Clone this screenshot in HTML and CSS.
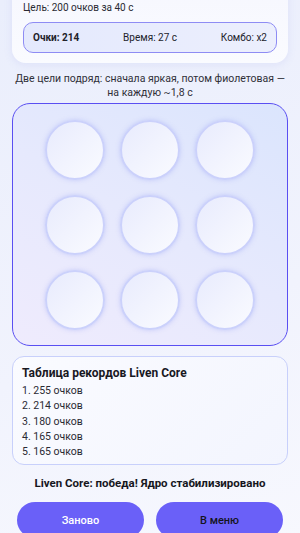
FILE: index.html
```html
<!DOCTYPE html>
<html lang="ru">
<head>
    <meta charset="UTF-8">
    <meta name="viewport" content="width=device-width, initial-scale=1.0">
    <title>Liven Core</title>
    <link rel="stylesheet" href="styles.css">
</head>
<body>
    <div class="app">
        <!-- Goal and stats -->
        <section class="status-card">
            <p class="goal">Цель: 200 очков за 40 с</p>
            <div class="stats">
                <span class="stat stat-score">Очки: 214</span>
                <span class="stat">Время: 27 с</span>
                <span class="stat">Комбо: x2</span>
            </div>
        </section>

        <p class="hint">Две цели подряд: сначала яркая, потом фиолетовая — на каждую ~1,8 с</p>

        <!-- Game board -->
        <section class="board">
            <div class="cell"></div>
            <div class="cell"></div>
            <div class="cell"></div>
            <div class="cell"></div>
            <div class="cell"></div>
            <div class="cell"></div>
            <div class="cell"></div>
            <div class="cell"></div>
            <div class="cell"></div>
        </section>

        <!-- Records -->
        <section class="records">
            <h2 class="records-title">Таблица рекордов Liven Core</h2>
            <ol class="records-list">
                <li>1. 255 очков</li>
                <li>2. 214 очков</li>
                <li>3. 180 очков</li>
                <li>4. 165 очков</li>
                <li>5. 165 очков</li>
            </ol>
        </section>

        <p class="result">Liven Core: победа! Ядро стабилизировано</p>

        <div class="actions">
            <button class="btn btn-restart">Заново</button>
            <button class="btn btn-menu">В меню</button>
        </div>
    </div>
</body>
</html>
```

FILE: styles.css
```css
/* Reset and base styles */
* {
    margin: 0;
    padding: 0;
    box-sizing: border-box;
    font-family: Roboto, 'Noto Sans', sans-serif;
}

body {
    background: linear-gradient(160deg, #eaeefc 0%, #f1f3fd 60%, #f7f8fe 100%);
    min-height: 100vh;
    overflow: hidden;
    color: #1b1b24;
}

.app {
    padding: 0 12px;
}

/* Status card */
.status-card {
    margin-top: -20px;
    padding: 20px 11px 10px;
    background: linear-gradient(180deg, #f6f7fe 0%, #fafbff 100%);
    border-radius: 0 0 14px 14px;
    box-shadow: 0 2px 8px rgba(120, 130, 220, 0.12);
}

.goal {
    font-size: 10px;
    line-height: 16px;
    color: #2a2a33;
    margin-bottom: 6px;
}

.stats {
    display: flex;
    justify-content: space-between;
    align-items: center;
    height: 31px;
    padding: 0 9px;
    border: 1px solid #8e8cf4;
    border-radius: 10px;
    background: linear-gradient(90deg, #e4e9fd 0%, #eceffd 100%);
}

.stat {
    font-size: 10px;
    color: #22222b;
}

.stat-score {
    font-weight: 700;
}

.hint {
    margin: 9px 0 3px;
    text-align: center;
    font-size: 10.5px;
    line-height: 14px;
    color: #2f2f38;
}

/* Game board */
.board {
    display: grid;
    grid-template-columns: repeat(3, 60px);
    gap: 15px;
    justify-content: center;
    padding: 16px 0 15px;
    border: 1.5px solid #5a4ff2;
    border-radius: 18px;
    background: linear-gradient(30deg, #efebfd 0%, #e6e9fd 50%, #dbe5fd 100%);
}

.cell {
    width: 60px;
    height: 60px;
    border-radius: 50%;
    border: 2px solid #cbd1fb;
    background: linear-gradient(135deg, #e8ebfd 0%, #fafbff 100%);
    box-shadow: 0 0 4px rgba(160, 170, 245, 0.5);
}

/* Records */
.records {
    margin-top: 10px;
    padding: 9px 9px 5px;
    border: 1px solid #c8d0fb;
    border-radius: 12px;
    background: linear-gradient(135deg, #fafbff 0%, #f3f5fe 100%);
}

.records-title {
    font-size: 12px;
    font-weight: 700;
    line-height: 14px;
    color: #18181f;
    margin-bottom: 3px;
}

.records-list {
    list-style: none;
}

.records-list li {
    font-size: 10.5px;
    line-height: 15.25px;
    color: #2a2a33;
}

.result {
    margin-top: 11px;
    text-align: center;
    font-size: 11.5px;
    line-height: 14px;
    font-weight: 700;
    color: #16161d;
}

/* Buttons */
.actions {
    display: flex;
    gap: 12px;
    padding: 0 5px;
    margin-top: 12px;
}

.btn {
    flex: 1;
    height: 36px;
    border: none;
    border-radius: 18px;
    background-color: #6a60f8;
    font-size: 11px;
    font-weight: 500;
    cursor: pointer;
}

.btn-restart {
    color: #ffffff;
}

.btn-menu {
    color: #15151c;
}
```
